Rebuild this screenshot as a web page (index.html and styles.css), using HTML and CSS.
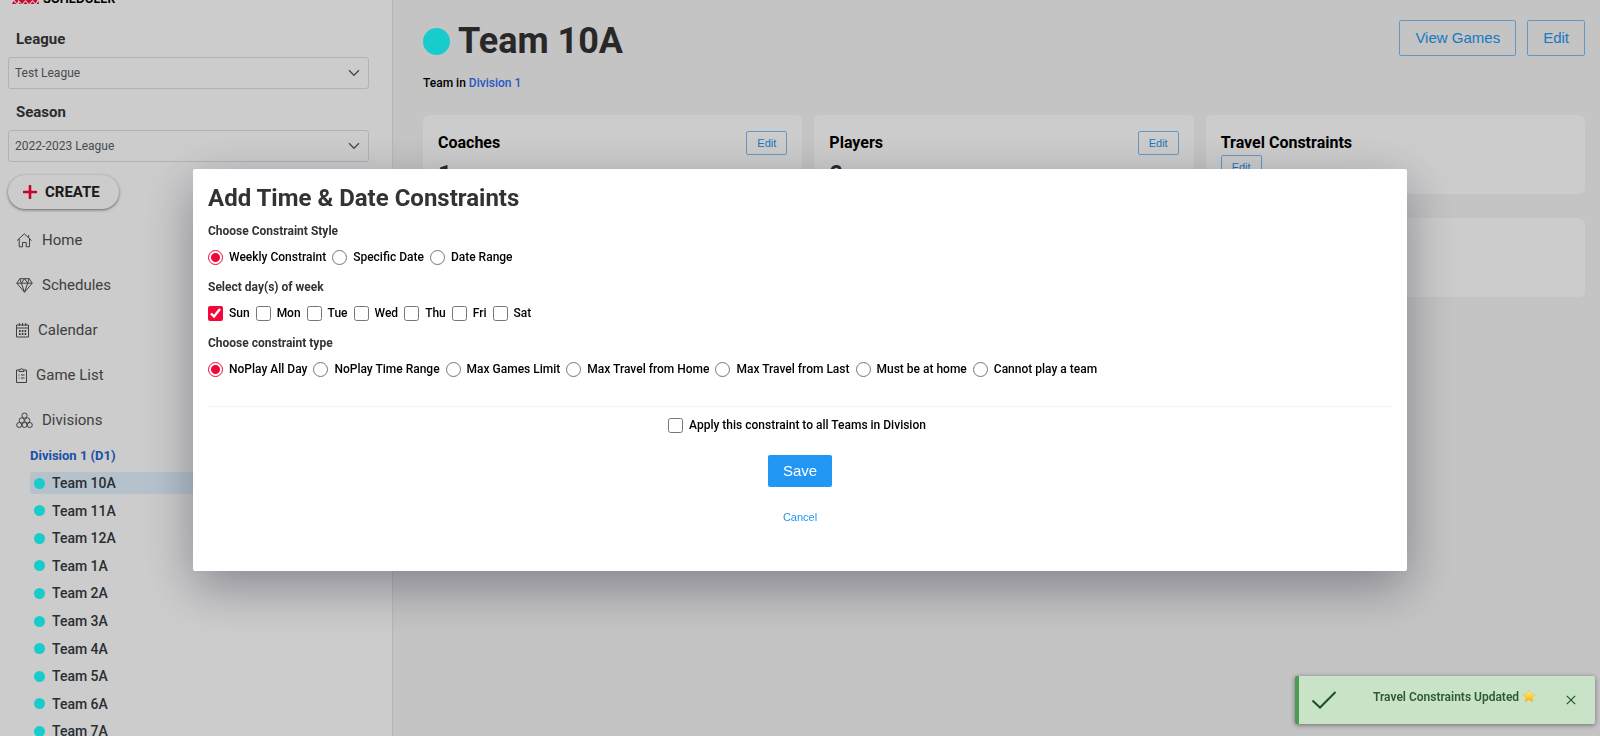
FILE: index.html
```html
<!DOCTYPE html>
<html lang="en">
<head>
<meta charset="utf-8">
<meta name="viewport" content="width=device-width, initial-scale=1">
<title>Team 10A - Scheduler</title>
<link rel="stylesheet" href="styles.css">
</head>
<body>
<div class="app">
  <aside class="sidebar">
    <div class="brand">
      <svg class="brand-mark" width="27" height="12" viewBox="0 0 27 12" aria-hidden="true"><path fill="#ff0a3c" d="M0 12l1.500-3 3 3zM2.500 8h4l-1.500 3.500zM6.500 12l1-1.500 1.500 1.500zM6.500 8h7L10 12zM11.500 12l2-2.500 2 2.500zM13.500 8h7L17 12zM18.500 12l2-2.500 2 2.500zM20.500 8h5l-2 3.500zM24.500 12l2-3 .5 3z"/></svg>
      <span class="brand-name">SCHEDULER</span>
    </div>
    <div class="field">
      <label class="field-label" for="league">League</label>
      <select class="select" id="league"><option>Test League</option></select>
    </div>
    <div class="field">
      <label class="field-label" for="season">Season</label>
      <select class="select" id="season"><option>2022-2023 League</option></select>
    </div>
    <button class="create" type="button">
      <svg width="14" height="14" viewBox="0 0 14 14" aria-hidden="true"><path d="M7 1v12M1 7h12" stroke="#f3063a" stroke-width="2.6" stroke-linecap="round"/></svg>
      CREATE
    </button>
    <nav class="nav">
      <a class="nav-item" href="#"><svg width="17" height="17" viewBox="0 0 17 17"><path d="M1 8.6l7.300-6.800 7.300 6.800M3.200 7v7.800h3.300v-4.300h3.700v4.300h3.300V7M12.700 5.500V3"/></svg>Home</a>
      <a class="nav-item" href="#"><svg width="17" height="17" viewBox="0 0 17 17"><path d="M3.800 1.700h9.400l3 4.500-7.700 9-7.700-9zM.8 6.200h15.400M5.300 6.200l3.200 9 3.200-9M3.800 1.700l1.500 4.500 3.200-4.500 3.200 4.500 1.500-4.500"/></svg>Schedules</a>
      <a class="nav-item" href="#"><svg width="13" height="17" viewBox="0 0 13 17"><path d="M.5 3h12v12H.5zM.5 6h12M3.300 1v3M6.500 1v3M9.700 1v3"/><path d="M3 9h7.500M3 12h7.500" stroke-width="1.800" stroke-dasharray="1.600 1.200"/></svg>Calendar</a>
      <a class="nav-item" href="#"><svg width="11" height="17" viewBox="0 0 11 17"><path d="M3 3H.5v12.500h10V3H8M3 4.500V2.800h1.300a1.200 1.200 0 0 1 2.400 0H8v1.700zM2.500 8h1M5 8h3.500M2.500 11h1M5 11h3.500"/></svg>Game List</a>
      <a class="nav-item" href="#"><svg width="17" height="17" viewBox="0 0 17 17"><circle cx="8.500" cy="3.600" r="2.600"/><circle cx="5.700" cy="8.400" r="2.600"/><circle cx="11.300" cy="8.400" r="2.600"/><circle cx="3.200" cy="13" r="2.500"/><circle cx="8.500" cy="13" r="2.500"/><circle cx="13.800" cy="13" r="2.500"/></svg>Divisions</a>
    </nav>
    <div class="division">
      <a class="division-name" href="#">Division 1 (D1)</a>
      <ul class="teams">
        <li><a class="team active" href="#"><i class="dot"></i>Team 10A</a></li>
        <li><a class="team" href="#"><i class="dot"></i>Team 11A</a></li>
        <li><a class="team" href="#"><i class="dot"></i>Team 12A</a></li>
        <li><a class="team" href="#"><i class="dot"></i>Team 1A</a></li>
        <li><a class="team" href="#"><i class="dot"></i>Team 2A</a></li>
        <li><a class="team" href="#"><i class="dot"></i>Team 3A</a></li>
        <li><a class="team" href="#"><i class="dot"></i>Team 4A</a></li>
        <li><a class="team" href="#"><i class="dot"></i>Team 5A</a></li>
        <li><a class="team" href="#"><i class="dot"></i>Team 6A</a></li>
        <li><a class="team" href="#"><i class="dot"></i>Team 7A</a></li>
      </ul>
    </div>
  </aside>

  <main class="main">
    <header class="page-head">
      <h1 class="page-title"><i class="dot dot-large"></i>Team 10A</h1>
      <div class="actions">
        <button class="btn" type="button">View Games</button>
        <button class="btn" type="button">Edit</button>
      </div>
    </header>
    <p class="subtitle">Team in <a href="#">Division 1</a></p>
    <section class="cards">
      <article class="card">
        <div class="card-head"><h2>Coaches</h2><button class="btn btn-small" type="button">Edit</button></div>
        <strong class="count">1</strong>
      </article>
      <article class="card">
        <div class="card-head"><h2>Players</h2><button class="btn btn-small" type="button">Edit</button></div>
        <strong class="count">0</strong>
      </article>
      <article class="card">
        <h2>Travel Constraints</h2>
        <button class="btn btn-small" type="button">Edit</button>
      </article>
      <article class="card card-wide"></article>
    </section>
  </main>
</div>

<div class="overlay">
  <form class="dialog" role="dialog" aria-labelledby="dialog-title">
    <h2 class="dialog-title" id="dialog-title">Add Time &amp; Date Constraints</h2>
    <fieldset class="group">
      <legend>Choose Constraint Style</legend>
      <div class="options">
        <label><input type="radio" name="style" checked>Weekly Constraint</label>
        <label><input type="radio" name="style">Specific Date</label>
        <label><input type="radio" name="style">Date Range</label>
      </div>
    </fieldset>
    <fieldset class="group">
      <legend>Select day(s) of week</legend>
      <div class="options">
        <label><input type="checkbox" checked>Sun</label>
        <label><input type="checkbox">Mon</label>
        <label><input type="checkbox">Tue</label>
        <label><input type="checkbox">Wed</label>
        <label><input type="checkbox">Thu</label>
        <label><input type="checkbox">Fri</label>
        <label><input type="checkbox">Sat</label>
      </div>
    </fieldset>
    <fieldset class="group">
      <legend>Choose constraint type</legend>
      <div class="options">
        <label><input type="radio" name="type" checked>NoPlay All Day</label>
        <label><input type="radio" name="type">NoPlay Time Range</label>
        <label><input type="radio" name="type">Max Games Limit</label>
        <label><input type="radio" name="type">Max Travel from Home</label>
        <label><input type="radio" name="type">Max Travel from Last</label>
        <label><input type="radio" name="type">Must be at home</label>
        <label><input type="radio" name="type">Cannot play a team</label>
      </div>
    </fieldset>
    <div class="dialog-foot">
      <div class="options"><label><input type="checkbox">Apply this constraint to all Teams in Division</label></div>
      <button class="save" type="button">Save</button>
      <button class="cancel" type="button">Cancel</button>
    </div>
  </form>
</div>

<div class="toast" role="status">
  <svg class="toast-check" width="26" height="20" viewBox="0 0 26 20" aria-hidden="true"><path d="M1.500 10.500l7.500 7L24.500 2" fill="none" stroke="#1b4d22" stroke-width="2"/></svg>
  <p class="toast-text">Travel Constraints Updated
    <svg width="14" height="14" viewBox="0 0 14 14" aria-hidden="true"><defs><linearGradient id="star" x2="0" y2="1"><stop offset="0" stop-color="#ffe9a0"/><stop offset=".5" stop-color="#ffd43c"/><stop offset="1" stop-color="#f9a80c"/></linearGradient></defs><path fill="url(#star)" stroke="#f5b52a" stroke-width=".4" stroke-linejoin="round" d="M7 .7l1.900 4.200 4.600.5-3.400 3.100.9 4.500L7 10.800 3 13l.9-4.500L.5 5.400l4.600-.5z"/></svg>
  </p>
  <button class="toast-close" type="button" aria-label="Close"><svg width="10" height="10" viewBox="0 0 10 10"><path d="M.8.8l8.400 8.400M9.200.8L.8 9.200" stroke="#1b4d22" stroke-width="1.100"/></svg></button>
</div>
</body>
</html>
```
FILE: styles.css
```css
* { box-sizing: border-box; }

body {
  margin: 0;
  height: 100vh;
  overflow: hidden;
  font-family: Roboto, "Liberation Sans", sans-serif;
  font-size: 12px;
  font-weight: 500;
  color: #000;
}

h1, h2, p, ul { margin: 0; padding: 0; }
a { color: inherit; text-decoration: none; }
button { font-family: "Liberation Sans", Arial, sans-serif; cursor: pointer; }

.app { display: flex; height: 100vh; background: #f5f5f5; }

/* Sidebar */
.sidebar {
  flex: 0 0 393px;
  padding: 0 23px 0 8px;
  overflow: hidden;
  background: #fff;
  border-right: 1px solid #e4e4e4;
}
.brand {
  display: flex;
  align-items: flex-end;
  gap: 4px;
  height: 4px;
  margin-bottom: 25px;
  padding-left: 4px;
}
.brand-mark { flex: none; }
.brand-name { font: 700 12px/10px Inter, sans-serif; }

.field { display: flex; flex-direction: column; gap: 7px; margin-bottom: 13px; }
.field-label { padding-left: 8px; font-size: 15px; line-height: 21px; font-weight: 700; color: #383838; }
.select {
  height: 32px;
  padding: 0 8px 0 6px;
  font: 400 12px/18px Roboto, sans-serif;
  color: #596067;
  border: 1px solid #dce0e4;
  border-radius: 3px;
  appearance: none;
  background: #fff url("data:image/svg+xml,%3Csvg xmlns='http://www.w3.org/2000/svg' width='12' height='8' viewBox='0 0 12 8'%3E%3Cpath d='M1 1.200l5 5 5-5' fill='none' stroke='%23596067' stroke-width='1.400'/%3E%3C/svg%3E") no-repeat right 8px center;
}
.create {
  display: flex;
  align-items: center;
  gap: 8px;
  height: 34px;
  padding: 0 19px 0 15px;
  font: 700 15px/20px Roboto, sans-serif;
  color: #222;
  background: #fff;
  border: 0;
  border-radius: 17px;
  box-shadow: 0 1px 3px rgba(0, 0, 0, .5);
}

.nav { display: flex; flex-direction: column; gap: 21px; margin-top: 19px; padding-left: 8px; }
.nav-item {
  display: flex;
  align-items: center;
  gap: 9px;
  font-size: 15px;
  line-height: 24px;
  font-weight: 400;
  color: #505050;
}
.nav-item svg { fill: none; stroke: #505050; stroke-width: 1; }

.division { margin-top: 14px; padding-left: 22px; }
.division-name { display: block; font-size: 13px; line-height: 20px; font-weight: 700; color: #1e66d0; }
.teams { display: grid; grid-auto-rows: 1fr; min-height: 276px; margin-top: 6px; list-style: none; }
.team {
  display: flex;
  align-items: center;
  gap: 7px;
  padding-left: 4px;
  font-size: 14px;
  line-height: 22px;
  color: #343a40;
  border-radius: 3px;
}
.team.active { background: #e3f3ff; }
.dot { flex: none; width: 11px; height: 11px; border-radius: 50%; background: #1fffff; }
.dot-large { width: 27px; height: 27px; }

/* Team page */
.main { flex: 1; min-width: 0; padding: 20px 15px 0 30px; }
.page-head { display: flex; justify-content: space-between; align-items: flex-start; }
.page-title { display: flex; align-items: center; gap: 8px; font-size: 36px; line-height: 42px; font-weight: 700; color: #333; }
.actions { display: flex; gap: 11px; }
.btn {
  padding: 0 15px;
  font-size: 15px;
  line-height: 34px;
  color: #2196f3;
  background: transparent;
  border: 1px solid #7fbdf4;
  border-radius: 2px;
}
.btn-small { padding: 0 10px; font-size: 11px; line-height: 22px; }
.subtitle { margin-top: 13px; line-height: 16px; }
.subtitle a { color: #3070f0; }

.cards { display: grid; grid-template-columns: repeat(3, 1fr); gap: 24px 12px; margin-top: 24px; }
.card { min-height: 79px; padding: 15px 15px 8px; background: #fff; border-radius: 6px; }
.card-wide { grid-column: 1 / -1; }
.card h2 { font-size: 16px; line-height: 25px; font-weight: 700; }
.card-head { display: flex; justify-content: space-between; align-items: center; }
.count { display: block; font-size: 24px; line-height: 24px; color: #333; margin-top: 7px; }

/* Dialog */
.overlay {
  position: fixed;
  inset: 0;
  display: flex;
  align-items: center;
  justify-content: center;
  padding-top: 4px;
  background: rgba(0, 0, 0, .2);
}
.dialog {
  width: 76%;
  max-width: 1214px;
  padding: 15px 15px 45px;
  background: #fff;
  border-radius: 2px;
  box-shadow: 0 16px 50px rgba(10, 15, 40, .36);
}
.dialog-title { font-size: 24px; line-height: 28px; font-weight: 700; color: #333; }
.group { min-width: 0; margin: 11px 0 0; padding: 0; border: 0; }
.group legend { padding: 0; line-height: 16px; font-weight: 700; color: #333; }
.options { display: flex; flex-wrap: wrap; }
.group .options { padding-top: 7px; }
.options label { display: flex; align-items: center; gap: 6px; margin-right: 6px; line-height: 22px; }
.options input { width: 15px; height: 15px; margin: 0; accent-color: #f3063a; }
.options input[type="radio"] { appearance: none; border: 1px solid #767676; border-radius: 50%; background: #fff; }
.options input[type="radio"]:checked {
  border-color: #f3063a;
  background: radial-gradient(circle, #f3063a 4px, #fff 5px);
}
.dialog-foot {
  display: flex;
  flex-direction: column;
  align-items: center;
  margin-top: 26px;
  padding-top: 7px;
  border-top: 1px solid #f4f4f4;
}
.save { margin-top: 19px; padding: 0 15px; font-size: 15px; line-height: 32px; color: #fff; background: #2196f3; border: 0; border-radius: 2px; }
.cancel { margin-top: 21px; padding: 0 8px; font-size: 11px; line-height: 18px; color: #2196f3; background: none; border: 0; }

/* Toast */
.toast {
  position: fixed;
  right: 5px;
  bottom: 12px;
  display: flex;
  align-items: center;
  width: 300px;
  height: 48px;
  padding: 0 19px 0 12px;
  color: #2c5a32;
  background: #c8e3c8;
  border-left: 4px solid #4a9c50;
  border-radius: 2px;
  box-shadow: 0 1px 5px rgba(0, 0, 0, .45);
}
.toast-text { flex: 1; padding: 0 0 7px 36px; line-height: 16px; font-weight: 600; white-space: nowrap; }
.toast-text svg { vertical-align: -2px; }
.toast-close { display: flex; padding: 0; background: none; border: 0; }
```
